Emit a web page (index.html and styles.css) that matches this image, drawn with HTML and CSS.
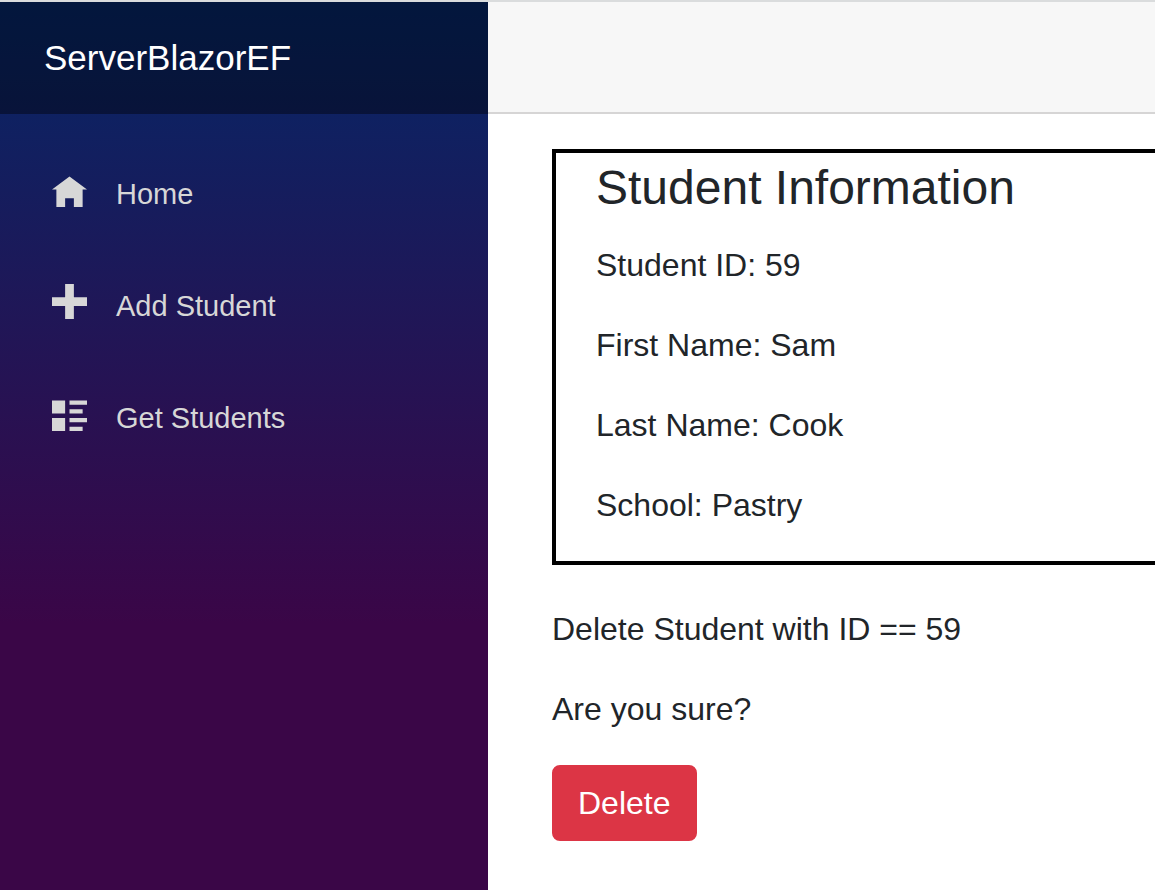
FILE: index.html
```html
<!DOCTYPE html>
<html lang="en">
<head>
  <meta charset="UTF-8" />
  <meta name="viewport" content="width=device-width, initial-scale=1.0" />
  <title>ServerBlazorEF</title>
  <link rel="stylesheet" href="styles.css">
</head>
<body>
  <div class="page">
    <div class="sidebar">
      <div class="brand-bar">
        <a class="brand" href="#">ServerBlazorEF</a>
      </div>
      <nav>
        <ul class="nav">
          <li>
            <a class="nav-link" href="#">
              <svg class="icon" viewBox="0 0 8 8" aria-hidden="true"><path d="M4 1L0 4h1v4h2V6h2v2h2V4h1z" /></svg>
              Home
            </a>
          </li>
          <li>
            <a class="nav-link" href="#">
              <svg class="icon" viewBox="0 0 8 8" aria-hidden="true"><path d="M3 0v3H0v2h3v3h2V5h3V3H5V0z" /></svg>
              Add Student
            </a>
          </li>
          <li>
            <a class="nav-link" href="#">
              <svg class="icon" viewBox="0 0 8 8" aria-hidden="true"><path d="M0 1v3h3V1zM4 1v1h4V1zM4 3v1h3V3zM0 5v3h3V5zM4 5v1h4V5zM4 7v1h3V7z" /></svg>
              Get Students
            </a>
          </li>
        </ul>
      </nav>
    </div>

    <div class="main">
      <div class="top-row"></div>
      <main class="content">
        <section class="student-card">
          <h1>Student Information</h1>
          <p>Student ID: 59</p>
          <p>First Name: Sam</p>
          <p>Last Name: Cook</p>
          <p>School: Pastry</p>
        </section>
        <p>Delete Student with ID == 59</p>
        <p>Are you sure?</p>
        <button class="btn-danger" type="button">Delete</button>
      </main>
    </div>
  </div>
</body>
</html>
```
FILE: styles.css
```css
* {
  box-sizing: border-box;
}

body {
  margin: 0;
  font-family: "Liberation Sans", Arial, sans-serif;
  font-size: 32px;
  line-height: 48px;
  color: #212529;
  background: #fff;
}

p {
  margin: 0 0 32px;
}

.page {
  display: flex;
  min-height: 100vh;
  border-top: 2px solid #dadcdd;
}

.sidebar {
  flex: 0 0 488px;
  background-image: linear-gradient(180deg, rgb(5, 39, 103) 0%, #3a0647 70%);
}

.brand-bar {
  display: flex;
  align-items: center;
  height: 112px;
  padding: 0 44px;
  background: rgba(0, 0, 0, 0.4);
}

.brand {
  color: #fff;
  font-size: 35px;
  text-decoration: none;
}

.nav {
  display: flex;
  flex-direction: column;
  gap: 16px;
  margin: 0;
  padding: 32px 52px;
  list-style: none;
}

.nav-link {
  display: flex;
  align-items: center;
  height: 96px;
  color: #d7d7d7;
  font-size: 29px;
  text-decoration: none;
}

.icon {
  width: 35px;
  height: 35px;
  margin: 0 29px 9px 0;
  fill: currentColor;
}

.main {
  flex: 1;
  min-width: 0;
}

.top-row {
  height: 112px;
  background: #f7f7f7;
  border-bottom: 2px solid #d6d5d5;
}

.content {
  padding: 35px 0 48px 64px;
}

.student-card {
  margin-bottom: 40px;
  padding: 6px 40px 0;
  border: 4px solid #000;
  border-right: 0;
}

.student-card h1 {
  margin: 0 0 24px;
  font-size: 48px;
  font-weight: normal;
  line-height: 58px;
}

.btn-danger {
  padding: 12px 24px;
  border: 2px solid #dc3545;
  border-radius: 8px;
  background: #dc3545;
  color: #fff;
  font: inherit;
  cursor: pointer;
}
```
